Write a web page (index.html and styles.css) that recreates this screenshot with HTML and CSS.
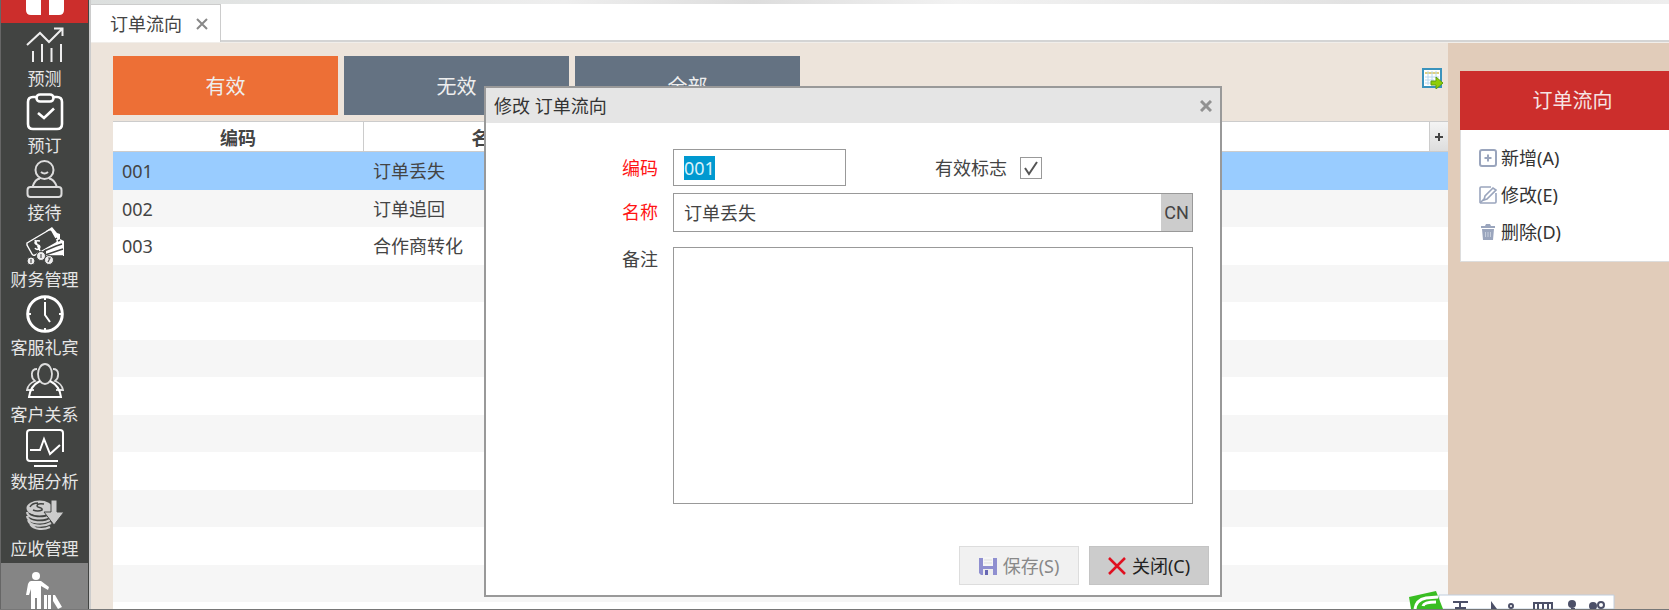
FILE: index.html
```html
<!DOCTYPE html>
<html lang="zh-CN">
<head>
    <meta charset="utf-8">
    <title>订单流向</title>
    <link rel="stylesheet" href="styles.css">
</head>
<body>
    <nav class="sidebar">
        <a href="#" class="home" aria-label="首页">
            <svg width="38" height="15" viewBox="0 0 38 15"><path d="M0 0H15V15H5Q0 15 0 10ZM23 0H38V10Q38 15 33 15H23Z" fill="#fff"/></svg>
        </a>
        <div class="nav-list">
            <a href="#" class="nav-item">
                <svg viewBox="0 0 38 38" fill="none" stroke="#eee" stroke-width="2"><path d="M1 19L14 7L23 16L36 3M28 2.500H36.500V10M7 25V36M16 18V36M25.500 22V36M35 18V36"/></svg>
                <span>预测</span>
            </a>
            <a href="#" class="nav-item">
                <svg viewBox="0 0 38 38" fill="none" stroke="#fff" stroke-width="2.600"><path d="M10 4H7Q2 4 2 9V31Q2 36 7 36H31Q36 36 36 31V9Q36 4 31 4H28"/><rect x="10.500" y="1.500" width="17" height="7" rx="3.500"/><path d="M12 20L18 25L28 15.500"/></svg>
                <span>预订</span>
            </a>
            <a href="#" class="nav-item">
                <svg viewBox="0 0 38 38" fill="none" stroke="#ddd" stroke-width="2"><circle cx="18.500" cy="10" r="9"/><path d="M15 12Q18.500 15 22 12M6.500 27Q9 19 14 18.500M31 27Q28 19 23 18.500"/><rect x="1.500" y="27" width="34" height="10" rx="3"/></svg>
                <span>接待</span>
            </a>
            <a href="#" class="nav-item">
                <svg viewBox="0 0 38 38"><path d="M20 4L26 0L31 6L34 7V12L38 14V29H20Z" fill="#fff"/><path d="M1 16L23 3Q25 2 26 4L31 13Q32 15 30 16L9 28Q7 29 6 27L1 18Z" fill="#424442" stroke="#fff" stroke-width="1.400"/><path d="M14 14Q9 13 9 16Q10 18 12 18Q15 19 13 22Q10 23 9 21M9 13L14 24" fill="none" stroke="#fff" stroke-width="1.600"/><path d="M18 24L30 19L36 17M19 28L37 22M24 29H37M28 13L31 11M32 14L34 13" fill="none" stroke="#424442" stroke-width="1.400"/><g fill="#eee" stroke="#424442"><circle cx="5" cy="34" r="4"/><circle cx="15" cy="29" r="4.500"/><circle cx="23" cy="33" r="4.500"/></g><path d="M5 32V36M15 27V31M22 31H24L22 35" fill="none" stroke="#555" stroke-width="1.200"/></svg>
                <span>财务管理</span>
            </a>
            <a href="#" class="nav-item">
                <svg viewBox="0 0 38 38" fill="none" stroke="#fff"><circle cx="19" cy="19" r="17.300" stroke-width="3"/><path d="M19 7V20L24 27" stroke-width="2"/><path d="M19 2V5M19 33V36M2 19H5M33 19H36" stroke-width="2"/></svg>
                <span>客服礼宾</span>
            </a>
            <a href="#" class="nav-item">
                <svg viewBox="0 0 38 38" fill="none" stroke="#ddd" stroke-width="1.800"><path d="M11 7C4 7 5 16 9 19C4 21 2 23 1 28H8M27 7C34 7 33 16 29 19C34 21 36 23 37 28H30"/><ellipse cx="19" cy="12" rx="7" ry="10"/><path d="M14 19C8 22 4 26 3 35H35C34 26 30 22 24 19" stroke="#fff" stroke-width="2"/></svg>
                <span>客户关系</span>
            </a>
            <a href="#" class="nav-item">
                <svg viewBox="0 0 38 38" fill="none" stroke="#fff" stroke-width="2"><path d="M37 23V4Q37 1 34 1H4Q1 1 1 4V29Q1 32 4 32H32M8 37H31M4 21H14L18 10L24 25L34 16"/></svg>
                <span>数据分析</span>
            </a>
            <a href="#" class="nav-item">
                <svg viewBox="0 0 38 38"><g fill="none" stroke="#ccc" stroke-width="2.200"><path d="M1 16C2 24 19 24 25 19M1 20C2 28 19 28 25 23M2 24C4 31 18 31 25 27M4 28C8 34 18 34 24 31"/></g><ellipse cx="13.500" cy="12" rx="13" ry="7.500" fill="#ccc"/><path d="M18 8Q11 7 11 10C11 12 17 11 16 14Q12 16 7 14M4 11Q6 7 12 7" fill="none" stroke="#424442" stroke-width="1.500"/><path d="M25 4H31V16H38L28 29L18 16H25Z" fill="#ccc" stroke="#424442"/></svg>
                <span>应收管理</span>
            </a>
        </div>
        <a href="#" class="nav-item active" aria-label="基础设置">
            <svg viewBox="0 0 38 38" fill="#fff"><circle cx="10" cy="5" r="4"/><path d="M5 10H15L23 16L22 19L15 15V38H11V27H9V38H5V18L3 24H0L2 13Q3 10 5 10ZM18 24H21V38H18ZM22 24H25V38H22ZM27 24H29L36 36L32 38L27 30Z"/></svg>
        </a>
    </nav>

    <div class="main">
        <div class="top-strip"></div>
        <div class="tabs">
            <div class="tab">
                <span>订单流向</span>
                <button type="button" class="tab-close" aria-label="关闭标签">
                    <svg width="12" height="12" viewBox="0 0 12 12"><path d="M1 1L11 11M11 1L1 11" stroke="#888" stroke-width="2"/></svg>
                </button>
            </div>
        </div>

        <div class="workspace">
            <main class="content">
                <div class="filters">
                    <button type="button" class="filter selected">有效</button>
                    <button type="button" class="filter">无效</button>
                    <button type="button" class="filter">全部</button>
                    <button type="button" class="export" aria-label="导出">
                        <svg width="21" height="21" viewBox="0 0 21 21"><rect x="1" y="1" width="18" height="18" fill="#fff" stroke="#3a93bd" stroke-width="2"/><path d="M3 5H17" stroke="#e0d080" stroke-width="2"/><path d="M3 9H17M3 12H12M3 15H10M6 3V17M10 3V15M14 3V10" stroke="#b8d8ee"/><path d="M9 13H14V9L21 15L14 21V17H9Z" fill="#8fce08" stroke="#5f9e12"/></svg>
                    </button>
                </div>
                <table class="grid">
                    <colgroup>
                        <col class="col-code">
                        <col class="col-name">
                        <col>
                        <col class="col-add">
                    </colgroup>
                    <thead>
                        <tr><th>编码</th><th>名称</th><th></th><th class="add"><button type="button" aria-label="添加列"><svg width="8" height="8" viewBox="0 0 8 8"><path d="M4 0V8M0 4H8" stroke="#444" stroke-width="2"/></svg></button></th></tr>
                    </thead>
                    <tbody>
                        <tr class="current"><td>001</td><td>订单丢失</td><td colspan="2"></td></tr>
                        <tr><td>002</td><td>订单追回</td><td colspan="2"></td></tr>
                        <tr><td>003</td><td>合作商转化</td><td colspan="2"></td></tr>
                        <tr><td colspan="4"></td></tr>
                        <tr><td colspan="4"></td></tr>
                        <tr><td colspan="4"></td></tr>
                        <tr><td colspan="4"></td></tr>
                        <tr><td colspan="4"></td></tr>
                        <tr><td colspan="4"></td></tr>
                        <tr><td colspan="4"></td></tr>
                        <tr><td colspan="4"></td></tr>
                        <tr><td colspan="4"></td></tr>
                        <tr><td colspan="4"></td></tr>
                    </tbody>
                </table>
            </main>

            <aside class="actions">
                <div class="card">
                    <h2>订单流向</h2>
                    <div class="card-body">
                        <button type="button">
                            <svg width="18" height="18" viewBox="0 0 18 18" fill="none" stroke="#9aa5bd" stroke-width="2"><rect x="1" y="1" width="16" height="16" rx="2"/><path d="M9 5.500V12.500M5.500 9H12.500"/></svg>
                            新增(A)
                        </button>
                        <button type="button">
                            <svg width="18" height="18" viewBox="0 0 18 18" fill="none" stroke="#9aa5bd" stroke-width="1.600"><path d="M12 1H2Q1 1 1 2V16Q1 17 2 17H16Q17 17 17 16V7"/><path d="M5 14L6 10L14 2L17 4L8 13ZM1 17L5 13"/></svg>
                            修改(E)
                        </button>
                        <button type="button">
                            <svg width="18" height="18" viewBox="0 0 18 18" fill="#9aa5bd"><path d="M2 3H6L7 1H11L12 3H16V5H2ZM3 6H15L14 17H4Z"/><path d="M6.500 9V14M9 9V14M11.500 9V14" stroke="#c5cddb"/></svg>
                            删除(D)
                        </button>
                    </div>
                </div>
            </aside>
        </div>
    </div>

    <form class="dialog" role="dialog" aria-labelledby="dialogTitle">
        <div class="dialog-header">
            <span id="dialogTitle">修改 订单流向</span>
            <button type="button" class="dialog-close" aria-label="关闭窗口">
                <svg width="12" height="12" viewBox="0 0 12 12"><path d="M1 1L11 11M11 1L1 11" stroke="#919191" stroke-width="3"/></svg>
            </button>
        </div>
        <div class="fields">
            <label for="code" class="required">编码</label>
            <div class="field-row">
                <input type="text" id="code" class="code" value="001">
                <label for="valid">有效标志</label>
                <input type="checkbox" id="valid" checked>
            </div>
            <label for="name" class="required">名称</label>
            <div class="name-box">
                <input type="text" id="name" value="订单丢失">
                <button type="button">CN</button>
            </div>
            <label for="remark" class="top">备注</label>
            <textarea id="remark"></textarea>
        </div>
        <div class="dialog-footer">
            <button type="submit" disabled>
                <svg width="18" height="18" viewBox="0 0 18 18"><path d="M0 1H4V9H14V1H18V18H2L0 16Z" fill="#8f8fd0"/><path d="M4 0H14V9H4Z" fill="#f6f6f6"/><path d="M5 3H13M5 6H13" stroke="#ddd"/><path d="M4 12H14V18H4Z" fill="#eee"/><path d="M6 13H9V18H6Z" fill="#6868b4"/></svg>
                保存(S)
            </button>
            <button type="button">
                <svg width="18" height="18" viewBox="0 0 18 18"><path d="M1 1L17 17M17 1L1 17" stroke="#e01020" stroke-width="2.500"/></svg>
                关闭(C)
            </button>
        </div>
    </form>

    <div class="ime">
        <svg width="206" height="18" viewBox="0 0 206 18">
            <path d="M30 4H205V18H30Z" fill="#fff" stroke="#c0cede"/>
            <path d="M0 6L27 0L34 18H2Z" fill="#39bd22"/>
            <path d="M6 18Q7 9 17 7L29 6M14 15Q15 11 27 11" fill="none" stroke="#fff" stroke-width="3"/>
            <g fill="none" stroke="#4c5068" stroke-width="2"><path d="M44 11H59M46 17H57M51 11V18"/><circle cx="102" cy="15" r="2"/><path d="M125 18V12H143V18M129 13V18M134 13V18M139 13V18"/><circle cx="192" cy="14" r="3"/></g>
            <path d="M82 10L88 18H82ZM162 17H166V18H162Z" fill="#4c5068"/>
            <circle cx="163" cy="13" r="4" fill="#4c5068"/><circle cx="184" cy="15" r="4" fill="#4c5068"/>
        </svg>
    </div>

    <script>
    // Start with the code ready to overwrite
    const code = document.getElementById("code");
    code.focus();
    code.select();
    </script>
</body>
</html>
```

FILE: styles.css
```css
* {
    box-sizing: border-box;
}

body {
    display: flex;
    height: 100vh;
    margin: 0;
    overflow: hidden;
    position: relative;
    background: #ede4db;
    border-bottom: 1px solid #777;
    color: #444;
    font: 18px/24px "Noto Sans", "Noto Sans CJK SC", sans-serif;
}

button,
input,
textarea {
    font: inherit;
    color: inherit;
}

button {
    padding: 0;
    border: none;
    background: none;
    cursor: pointer;
}

svg {
    display: block;
    flex: none;
}

/* Sidebar */
.sidebar {
    display: flex;
    flex-direction: column;
    flex: none;
    width: 89px;
    padding-right: 1px;
    background: #424442;
    border-left: 1px solid #666;
}

.home {
    display: flex;
    justify-content: center;
    height: 23px;
    background: #cc2e2c;
}

.nav-list {
    display: grid;
    flex: 1;
    grid-auto-rows: 1fr;
    padding-top: 3px;
}

.nav-item {
    display: flex;
    flex-direction: column;
    align-items: center;
    color: #e6e6e6;
    font-size: 17px;
    line-height: 30px;
    text-decoration: none;
}

.nav-list .nav-item {
    height: 67px;
}

.nav-item svg {
    width: 38px;
    height: 38px;
}

.nav-item.active {
    height: 46px;
    padding-top: 8px;
    overflow: hidden;
    background: #858585;
}

/* Tabs */
.main {
    display: flex;
    flex: 1;
    flex-direction: column;
    min-width: 0;
    border-left: 2px solid #ccc;
}

.top-strip {
    height: 4px;
    background: linear-gradient(100deg, #dcdfde, #eee 30%, #ddd 42%, #f2f2f2 55%, #e2e2e2 80%, #eee);
}

.tabs {
    height: 38px;
    background: #fff;
    border-bottom: 2px solid #d4d4d4;
}

.tab {
    display: flex;
    align-items: center;
    gap: 14px;
    width: 130px;
    height: 38px;
    padding-left: 19px;
    background: #fff;
    border: solid #ccc;
    border-width: 1px 1px 0 0;
}

.workspace {
    display: flex;
    flex: 1;
    min-height: 0;
    border-top: 1px solid #f1eeea;
}

.content {
    flex: 1;
    min-width: 0;
    padding: 13px 0 0 22px;
    overflow: hidden;
}

/* Filters */
.filters {
    display: flex;
    gap: 6px;
    margin-bottom: 6px;
}

.filter {
    width: 225px;
    height: 59px;
    padding-top: 2px;
    background: #647282;
    color: #eee;
    font-size: 20px;
}

.filter.selected {
    background: #ed6f36;
}

.export {
    align-self: flex-start;
    margin: 12px 5px 0 auto;
}

/* Table */
.grid {
    width: 100%;
    background: #fff;
    border-collapse: separate;
    border-spacing: 0;
    table-layout: fixed;
}

.col-code {
    width: 251px;
}

.col-name {
    width: 252px;
}

.col-add {
    width: 18px;
}

.grid th {
    height: 31px;
    padding: 2px 0 0;
    border: solid #ccc;
    border-width: 1px 1px 1px 0;
}

.grid .add {
    padding: 0;
    background: linear-gradient(#f4f4f4, #ddd);
    border-right: none;
}

.add button {
    display: block;
    margin: 0 auto;
}

.grid td {
    height: 38px;
    padding: 0 9px;
}

.grid tr:nth-child(even) td {
    height: 37px;
    background: #f6f6f6;
}

.grid .current td {
    background: #99ccff;
}

/* Actions */
.actions {
    flex: none;
    width: 221px;
    padding: 28px 0 0 12px;
    background: #e1ccba;
    overflow: hidden;
}

.card {
    width: 225px;
    background: #fff;
    border: 1px solid #ddd;
}

.card h2 {
    margin: -1px;
    background: #cc2e2c;
    color: #f6e4e4;
    font-size: 20px;
    font-weight: normal;
    line-height: 59px;
    text-align: center;
}

.card-body {
    display: grid;
    justify-items: start;
    gap: 13px;
    padding: 17px 18px 17px;
    color: #333;
}

.card-body button,
.dialog-footer button {
    display: flex;
    align-items: center;
    gap: 4px;
}

/* Dialog */
.dialog {
    position: absolute;
    top: 86px;
    left: 484px;
    width: 738px;
    background: #fff;
    border: 2px solid #999;
}

.dialog-header {
    display: flex;
    align-items: center;
    justify-content: space-between;
    height: 35px;
    padding: 0 8px;
    background: #e5e5e5;
    color: #333;
}

.fields {
    display: grid;
    grid-template-columns: 172px 1fr;
    column-gap: 15px;
    padding: 26px 27px 0 0;
}

.fields > label {
    line-height: 38px;
    text-align: right;
}

.required {
    color: #ff1515;
}

.fields .top {
    line-height: 24px;
}

.field-row {
    display: flex;
    align-items: center;
    margin-bottom: 7px;
}

.fields input[type="text"],
textarea {
    padding: 0 10px;
    background: #fff;
    border: 1px solid #999;
    outline: none;
}

.fields .code {
    width: 173px;
    height: 37px;
    margin-right: 89px;
}

.code::selection {
    background: #0099d0;
    color: #d9f2fa;
}

input[type="checkbox"] {
    appearance: none;
    width: 22px;
    height: 22px;
    margin: 0 0 0 13px;
    border: 1px solid #999;
}

input[type="checkbox"]:checked {
    background: url("data:image/svg+xml,%3Csvg xmlns='http://www.w3.org/2000/svg' viewBox='0 0 20 20'%3E%3Cpath d='M4 10L8 16L16 4' fill='none' stroke='%23555' stroke-width='2'/%3E%3C/svg%3E");
}

.name-box {
    display: flex;
    height: 39px;
    margin-bottom: 15px;
    border: 1px solid #999;
}

.fields .name-box input {
    flex: 1;
    border: none;
}

.name-box button {
    width: 31px;
    background: #ccc;
    font-family: Roboto, sans-serif;
    font-size: 18px;
}

textarea {
    height: 257px;
    resize: none;
}

.dialog-footer {
    display: flex;
    justify-content: flex-end;
    gap: 10px;
    padding: 42px 11px 10px 0;
}

.dialog-footer button {
    justify-content: center;
    gap: 6px;
    width: 120px;
    height: 39px;
    background: #ccc;
    border: 1px solid #c4c4c4;
    color: #222;
}

.dialog-footer button:disabled {
    background: #f1f1f1;
    border-color: #ddd;
    color: #888;
}

/* Input method bar */
.ime {
    position: absolute;
    right: 54px;
    bottom: 0;
}
```
